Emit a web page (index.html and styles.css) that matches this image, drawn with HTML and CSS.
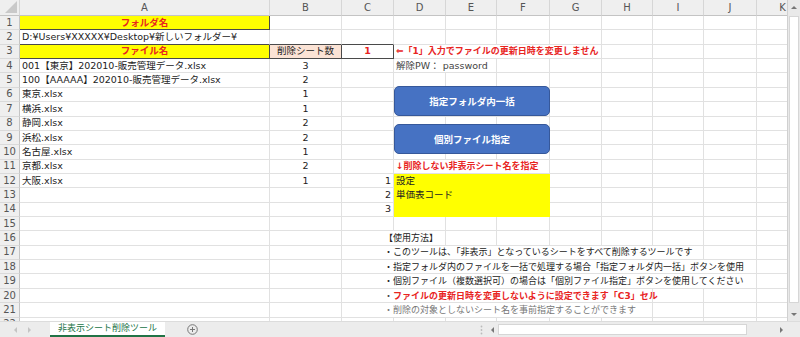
FILE: index.html
```html
<!DOCTYPE html>
<html lang="ja">
<head>
    <meta charset="UTF-8">
    <title>非表示シート削除ツール</title>
    <link rel="stylesheet" href="styles.css">
</head>
<body>
<div class="window">
    <div class="main">
        <div class="grid-wrap">
            <table class="sheet">
                <colgroup>
                    <col class="w-hdr"><col class="w-a"><col class="w-b"><col class="w-c"><col class="w-d"><col class="w-e">
                    <col class="w-f"><col class="w-g"><col class="w-h"><col class="w-i"><col class="w-j"><col class="w-k">
                </colgroup>
                <thead>
                    <tr>
                        <th class="corner"><svg width="12" height="12" viewBox="0 0 12 12"><polygon points="12,0 12,12 0,12" fill="#c9c9c9"/></svg></th>
                        <th>A</th><th>B</th><th>C</th><th>D</th><th>E</th><th>F</th><th>G</th><th>H</th><th>I</th><th>J</th><th>K</th>
                    </tr>
                </thead>
                <tbody>
                    <tr><th>1</th><td class="yel title box">フォルダ名</td><td></td><td></td><td></td><td></td><td></td><td></td><td></td><td></td><td></td><td></td></tr>
                    <tr><th>2</th><td class="dark-b">D:¥Users¥XXXXX¥Desktop¥新しいフォルダー¥</td><td class="dark-b"></td><td class="dark-b"></td><td></td><td></td><td></td><td></td><td></td><td></td><td></td><td></td></tr>
                    <tr><th>3</th><td class="yel title box">ファイル名</td><td class="peach box num">削除シート数</td><td class="box num red">1</td><td colspan="4" class="red">⇐「1」入力でファイルの更新日時を変更しません</td><td></td><td></td><td></td><td></td></tr>
                    <tr><th>4</th><td>001【東京】202010-販売管理データ.xlsx</td><td class="num">3</td><td></td><td colspan="2" class="note">解除PW： password</td><td></td><td></td><td></td><td></td><td></td><td></td></tr>
                    <tr><th>5</th><td>100【AAAAA】202010-販売管理データ.xlsx</td><td class="num">2</td><td></td><td></td><td></td><td></td><td></td><td></td><td></td><td></td><td></td></tr>
                    <tr><th>6</th><td>東京.xlsx</td><td class="num">1</td><td></td><td></td><td></td><td></td><td></td><td></td><td></td><td></td><td></td></tr>
                    <tr><th>7</th><td>横浜.xlsx</td><td class="num">1</td><td></td><td></td><td></td><td></td><td></td><td></td><td></td><td></td><td></td></tr>
                    <tr><th>8</th><td>静岡.xlsx</td><td class="num">2</td><td></td><td></td><td></td><td></td><td></td><td></td><td></td><td></td><td></td></tr>
                    <tr><th>9</th><td>浜松.xlsx</td><td class="num">2</td><td></td><td></td><td></td><td></td><td></td><td></td><td></td><td></td><td></td></tr>
                    <tr><th>10</th><td>名古屋.xlsx</td><td class="num">1</td><td></td><td></td><td></td><td></td><td></td><td></td><td></td><td></td><td></td></tr>
                    <tr><th>11</th><td>京都.xlsx</td><td class="num">2</td><td></td><td colspan="3" class="red">↓削除しない非表示シート名を指定</td><td></td><td></td><td></td><td></td><td></td></tr>
                    <tr><th>12</th><td>大阪.xlsx</td><td class="num">1</td><td class="right">1</td><td colspan="3" class="yel">設定</td><td></td><td></td><td></td><td></td><td></td></tr>
                    <tr><th>13</th><td></td><td></td><td class="right">2</td><td colspan="3" class="yel">単価表コード</td><td></td><td></td><td></td><td></td><td></td></tr>
                    <tr><th>14</th><td></td><td></td><td class="right">3</td><td colspan="3" class="yel"></td><td></td><td></td><td></td><td></td><td></td></tr>
                    <tr><th>15</th><td></td><td></td><td></td><td></td><td></td><td></td><td></td><td></td><td></td><td></td><td></td></tr>
                    <tr><th>16</th><td></td><td></td><td colspan="2" class="indent">【使用方法】</td><td></td><td></td><td></td><td></td><td></td><td></td><td></td></tr>
                    <tr><th>17</th><td></td><td></td><td colspan="7" class="indent">・このツールは、「非表示」となっているシートをすべて削除するツールです</td><td></td><td></td></tr>
                    <tr><th>18</th><td></td><td></td><td colspan="8" class="indent">・指定フォルダ内のファイルを一括で処理する場合「指定フォルダ内一括」ボタンを使用</td><td></td></tr>
                    <tr><th>19</th><td></td><td></td><td colspan="8" class="indent">・個別ファイル（複数選択可）の場合は「個別ファイル指定」ボタンを使用してください</td><td></td></tr>
                    <tr><th>20</th><td></td><td></td><td colspan="6" class="indent"><span class="bullet">・</span><span class="red">ファイルの更新日時を変更しないように設定できます「C3」セル</span></td><td></td><td></td><td></td></tr>
                    <tr><th>21</th><td></td><td></td><td colspan="6" class="indent muted">・削除の対象としないシート名を事前指定することができます</td><td></td><td></td><td></td></tr>
                    <tr><th>22</th><td></td><td></td><td></td><td></td><td></td><td></td><td></td><td></td><td></td><td></td><td></td></tr>
                </tbody>
            </table>
            <!-- シート上の図形ボタン -->
            <div class="shape shape-folder">指定フォルダ内一括</div>
            <div class="shape shape-file">個別ファイル指定</div>
        </div>
        <div class="vscroll">
            <div class="arrow-box"><i class="tri tri-up"></i></div>
            <div class="vthumb"></div>
            <div class="arrow-box"><i class="tri tri-down"></i></div>
        </div>
    </div>
    <div class="tabbar">
        <div class="tab-nav"><i class="tri tri-left faint"></i><i class="tri tri-right faint"></i></div>
        <div class="tab">非表示シート削除ツール</div>
        <div class="tab-add">
            <svg width="11" height="11" viewBox="0 0 11 11"><circle cx="5.5" cy="5.5" r="4.8" fill="none" stroke="#777" stroke-width="1"/><path d="M5.5 3v5M3 5.5h5" stroke="#777" stroke-width="1"/></svg>
        </div>
        <div class="tab-space"></div>
        <div class="split"><svg width="3" height="10" viewBox="0 0 3 10"><circle cx="1.5" cy="1.5" r="0.9" fill="#bbb"/><circle cx="1.5" cy="5" r="0.9" fill="#bbb"/><circle cx="1.5" cy="8.5" r="0.9" fill="#bbb"/></svg></div>
        <div class="hscroll">
            <div class="h-arrow"><i class="tri tri-left"></i></div>
            <div class="hthumb"></div>
            <div class="htrack"></div>
            <div class="h-arrow"><i class="tri tri-right"></i></div>
        </div>
        <div class="corner-box"></div>
    </div>
</div>
</body>
</html>
```

FILE: styles.css
```css
body {
    margin: 0;
    background-color: #fff;
    font-family: "DejaVu Sans", "Noto Sans CJK JP", sans-serif;
    font-size: 9.5px;
    color: #222;
    overflow: hidden;
}
.window {
    width: 800px;
    height: 337px;
    display: flex;
    flex-direction: column;
}
.main {
    display: flex;
    height: 321px;
}
.grid-wrap {
    position: relative;
    width: 787px;
    overflow: hidden;
}

/* シート本体 */
.sheet {
    border-collapse: separate;
    border-spacing: 0;
    table-layout: fixed;
    width: 809px;
}
.w-hdr { width: 20px; }
.w-a { width: 250px; }
.w-b { width: 72px; }
.w-c { width: 52px; }
.w-d { width: 52px; }
.w-e { width: 51px; }
.w-f { width: 53px; }
.w-g { width: 52px; }
.w-h { width: 51px; }
.w-i { width: 51px; }
.w-j { width: 53px; }
.w-k { width: 52px; }
.sheet th,
.sheet td {
    box-sizing: border-box;
    height: 14.37px;
    padding: 0 2px;
    border-right: 1px solid #e1e1e1;
    border-bottom: 1px solid #e1e1e1;
    white-space: nowrap;
    overflow: visible;
    line-height: 12px;
    text-align: left;
    vertical-align: middle;
}
.sheet thead th {
    height: 16px;
    background-color: #efefef;
    color: #555;
    font-weight: normal;
    font-size: 10px;
    text-align: center;
    border-right-color: #d6d6d6;
    border-bottom-color: #c4c4c4;
}
.sheet thead th.corner {
    padding: 0;
    text-align: right;
    vertical-align: bottom;
    line-height: 0;
}
.corner svg {
    margin: 0 2px 2px 0;
}
.sheet tbody th {
    padding: 0;
    background-color: #efefef;
    color: #555;
    font-weight: normal;
    font-size: 10px;
    text-align: center;
    border-right-color: #c4c4c4;
    border-bottom-color: #dadada;
}

/* セルの書式 */
.yel {
    background-color: #ffff00;
}
.sheet td.yel {
    border-right-color: #ffff00;
    border-bottom-color: #ffff00;
}
.peach {
    background-color: #fbe3d5;
}
.sheet td.box {
    border-right-color: #4a4a4a;
    border-bottom-color: #4a4a4a;
}
.sheet td.dark-b {
    border-bottom-color: #4a4a4a;
}
.sheet td.title {
    text-align: center;
    color: #e8251f;
    font-weight: bold;
}
.sheet td.num {
    text-align: center;
}
.sheet td.right {
    text-align: right;
}
.red {
    color: #e8251f;
    font-weight: bold;
    font-size: 9px;
}
.sheet td.num.red {
    font-size: 9.5px;
}
.note {
    color: #444;
}
.sheet td.indent {
    padding-left: 42px;
    font-size: 9px;
}
.bullet {
    color: #444;
}
.muted {
    color: #777;
}

/* 図形ボタン */
.shape {
    position: absolute;
    left: 394px;
    width: 156px;
    height: 30px;
    box-sizing: border-box;
    display: flex;
    justify-content: center;
    align-items: center;
    background-color: #4672c3;
    border: 1px solid #36589a;
    border-radius: 5px;
    color: #fff;
    font-weight: bold;
    font-size: 9.5px;
}
.shape-folder {
    top: 86px;
}
.shape-file {
    top: 124px;
}

/* 小さな三角 */
.tri {
    display: block;
    width: 0;
    height: 0;
    border: 3px solid transparent;
}
.tri-up {
    border-top-width: 0;
    border-bottom-color: #777;
}
.tri-down {
    border-bottom-width: 0;
    border-top-color: #777;
}
.tri-left {
    border-left-width: 0;
    border-right-color: #777;
}
.tri-right {
    border-right-width: 0;
    border-left-color: #777;
}
.tri-left.faint {
    border-right-color: #c4c4c4;
}
.tri-right.faint {
    border-left-color: #c4c4c4;
}

/* スクロールバー */
.vscroll {
    width: 13px;
    box-sizing: border-box;
    display: flex;
    flex-direction: column;
    background-color: #e9e9e9;
    border-left: 1px solid #d0d0d0;
}
.arrow-box {
    height: 14px;
    display: flex;
    justify-content: center;
    align-items: center;
}
.vthumb {
    flex: 1;
    margin: 2px 1px 4px;
    background-color: #fff;
    border: 1px solid #d6d6d6;
}
.tabbar {
    display: flex;
    align-items: stretch;
    height: 16px;
    background-color: #ececec;
    border-top: 1px solid #dcdcdc;
}
.tab-nav {
    width: 44px;
    display: flex;
    justify-content: center;
    align-items: center;
    gap: 11px;
}
.tab {
    margin-left: 6px;
    padding: 0 8px;
    background-color: #fff;
    color: #217346;
    font-size: 9px;
    line-height: 13px;
    border-bottom: 2px solid #217346;
    box-sizing: border-box;
}
.tab-add {
    margin-left: 22px;
    display: flex;
    align-items: center;
}
.tab-space {
    flex: 1;
}
.split {
    width: 12px;
    display: flex;
    align-items: center;
    justify-content: center;
}
.hscroll {
    width: 300px;
    display: flex;
    align-items: center;
}
.h-arrow {
    width: 11px;
    height: 11px;
    display: flex;
    justify-content: center;
    align-items: center;
}
.hthumb {
    width: 249px;
    height: 11px;
    box-sizing: border-box;
    background-color: #fff;
    border: 1px solid #d6d6d6;
}
.htrack {
    flex: 1;
}
.corner-box {
    width: 13px;
}
```
